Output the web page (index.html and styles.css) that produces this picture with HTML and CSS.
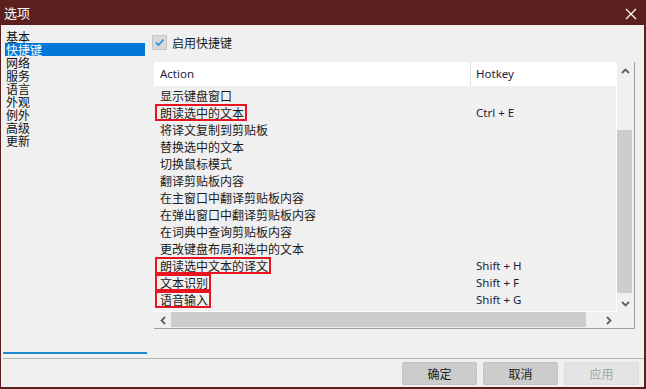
FILE: index.html
```html
<!DOCTYPE html>
<html lang="zh-CN">
<head>
    <meta charset="UTF-8">
    <title>选项</title>
    <link rel="stylesheet" href="styles.css">
</head>
<body>
    <div class="window">
        <div class="titlebar">
            <span class="title">选项</span>
            <svg class="close" width="12" height="12" viewBox="0 0 12 12">
                <path d="M1 1 L11 11 M11 1 L1 11" stroke="#fff" stroke-width="1.3" fill="none"/>
            </svg>
        </div>

        <div class="main">
            <ul class="nav">
                <li>基本</li>
                <li class="active">快捷键</li>
                <li>网络</li>
                <li>服务</li>
                <li>语言</li>
                <li>外观</li>
                <li>例外</li>
                <li>高级</li>
                <li>更新</li>
            </ul>

            <div class="content">
                <label class="check">
                    <span class="box">
                        <svg width="13" height="13" viewBox="0 0 13 13">
                            <path d="M3 6.5 L5.5 9 L10.5 3.5" stroke="#1c8fd6" stroke-width="1.6" fill="none"/>
                        </svg>
                    </span>
                    启用快捷键
                </label>

                <div class="table">
                    <div class="list">
                        <div class="head">
                            <div class="col-action">Action</div>
                            <div class="col-key">Hotkey</div>
                        </div>
                        <div class="rows">
                            <div class="row"><div class="col-action">显示键盘窗口</div><div class="col-key"></div></div>
                            <div class="row"><div class="col-action"><span class="mark">朗读选中的文本</span></div><div class="col-key">Ctrl + E</div></div>
                            <div class="row"><div class="col-action">将译文复制到剪贴板</div><div class="col-key"></div></div>
                            <div class="row"><div class="col-action">替换选中的文本</div><div class="col-key"></div></div>
                            <div class="row"><div class="col-action">切换鼠标模式</div><div class="col-key"></div></div>
                            <div class="row"><div class="col-action">翻译剪贴板内容</div><div class="col-key"></div></div>
                            <div class="row"><div class="col-action">在主窗口中翻译剪贴板内容</div><div class="col-key"></div></div>
                            <div class="row"><div class="col-action">在弹出窗口中翻译剪贴板内容</div><div class="col-key"></div></div>
                            <div class="row"><div class="col-action">在词典中查询剪贴板内容</div><div class="col-key"></div></div>
                            <div class="row"><div class="col-action">更改键盘布局和选中的文本</div><div class="col-key"></div></div>
                            <div class="row"><div class="col-action"><span class="mark">朗读选中文本的译文</span></div><div class="col-key">Shift + H</div></div>
                            <div class="row"><div class="col-action"><span class="mark">文本识别</span></div><div class="col-key">Shift + F</div></div>
                            <div class="row"><div class="col-action"><span class="mark">语音输入</span></div><div class="col-key">Shift + G</div></div>
                        </div>
                    </div>

                    <div class="vscroll">
                        <div class="arrow">
                            <svg width="9" height="6" viewBox="0 0 9 6"><path d="M1 5 L4.5 1.5 L8 5" stroke="#606060" stroke-width="1.8" fill="none"/></svg>
                        </div>
                        <div class="vtrack"><div class="vthumb"></div></div>
                        <div class="arrow">
                            <svg width="9" height="6" viewBox="0 0 9 6"><path d="M1 1 L4.5 4.5 L8 1" stroke="#606060" stroke-width="1.8" fill="none"/></svg>
                        </div>
                    </div>

                    <div class="hscroll">
                        <div class="arrow">
                            <svg width="6" height="9" viewBox="0 0 6 9"><path d="M5 1 L1.5 4.5 L5 8" stroke="#606060" stroke-width="1.8" fill="none"/></svg>
                        </div>
                        <div class="htrack"><div class="hthumb"></div></div>
                        <div class="arrow">
                            <svg width="6" height="9" viewBox="0 0 6 9"><path d="M1 1 L4.5 4.5 L1 8" stroke="#606060" stroke-width="1.8" fill="none"/></svg>
                        </div>
                    </div>

                    <div class="corner"></div>
                </div>
            </div>
        </div>

        <div class="separator"></div>

        <div class="footer">
            <button class="btn">确定</button>
            <button class="btn">取消</button>
            <button class="btn disabled">应用</button>
        </div>
    </div>
</body>
</html>
```

FILE: styles.css
```css
body {
    margin: 0;
    font-family: "Noto Sans", "Noto Sans CJK SC", sans-serif;
    font-size: 11.5px;
    color: #1a1a1a;
}

.window {
    width: 646px;
    height: 389px;
    box-sizing: border-box;
    padding: 0 2px 2px 1px;
    background-color: #5b1f1e;
    display: flex;
    flex-direction: column;
}

.titlebar {
    height: 25px;
    flex: none;
    display: flex;
    align-items: center;
    justify-content: space-between;
    padding: 0 7px 0 3px;
}

.title {
    color: #fff;
    font-family: "Noto Sans CJK SC", sans-serif;
    font-size: 13px;
    line-height: 16px;
}

.close {
    margin-top: 2px;
}

.main {
    height: 333px;
    flex: none;
    display: flex;
    background-color: #f0f0f0;
}

/* left list */
.nav {
    list-style: none;
    margin: 0 0 4px 2px;
    padding: 5px 0 0 0;
    width: 144px;
    border-bottom: 2px solid #1e8ad0;
    font-family: "Noto Sans CJK SC", sans-serif;
    font-size: 12px;
}

.nav li {
    height: 13px;
    line-height: 13px;
    margin-left: 2px;
    width: 140px;
    padding-left: 1px;
    box-sizing: border-box;
    color: #111;
}

.nav li.active {
    background-color: #0078d7;
    color: #fff;
}

.content {
    padding-left: 5px;
    display: flex;
    flex-direction: column;
}

.check {
    margin-top: 10px;
    height: 15px;
    display: flex;
    align-items: center;
    gap: 5px;
    font-family: "Noto Sans CJK SC", sans-serif;
    font-size: 12px;
    color: #1a1a1a;
}

.box {
    width: 15px;
    height: 15px;
    box-sizing: border-box;
    background-color: #d9d9d9;
    border: 1px solid #c6c6c6;
    display: flex;
    align-items: center;
    justify-content: center;
}

/* shortcut table */
.table {
    margin: 12px 0 0 2px;
    display: grid;
    grid-template-columns: 463px 16px;
    grid-template-rows: 250px 16px;
    width: 480px;
    border-right: 1px solid #a0a0a0;
    border-bottom: 1px solid #a0a0a0;
}

.list {
    display: flex;
    flex-direction: column;
    overflow: hidden;
}

.head {
    height: 24px;
    flex: none;
    background-color: #fff;
    display: flex;
    color: #1c1c3a;
}

.head .col-action,
.head .col-key {
    line-height: 24px;
}

.col-action {
    width: 317px;
    flex: none;
    padding-left: 6px;
    box-sizing: border-box;
    white-space: nowrap;
}

.head .col-action {
    border-right: 1px solid #e3e3e3;
}

.col-key {
    padding-left: 5px;
    white-space: nowrap;
}

.rows {
    flex: 1;
    padding-top: 1px;
    border-right: 1px solid #fff;
    border-bottom: 1px solid #fff;
}

.row {
    height: 17px;
    display: flex;
    line-height: 17px;
}

.row .col-action {
    font-family: "Noto Sans CJK SC", sans-serif;
    font-size: 12px;
    color: #1a1a1a;
}

.row .col-key {
    color: #1c1c3a;
}

.mark {
    display: inline-block;
    height: 17px;
    line-height: 13px;
    box-sizing: border-box;
    border: 2px solid #e8141f;
    padding: 0 1px 0 3px;
    margin-left: -5px;
}

/* scrollbars */
.vscroll {
    display: flex;
    flex-direction: column;
    background-color: #f0f0f0;
}

.vscroll .arrow {
    height: 17px;
    display: flex;
    align-items: center;
    justify-content: center;
}

.vtrack {
    flex: 1;
}

.vthumb {
    margin: 51px 1px 0 0;
    height: 163px;
    background-color: #cdcdcd;
}

.hscroll {
    display: flex;
    background-color: #f0f0f0;
}

.hscroll .arrow {
    width: 17px;
    display: flex;
    align-items: center;
    justify-content: center;
}

.htrack {
    flex: 1;
}

.hthumb {
    width: 415px;
    height: 15px;
    background-color: #cdcdcd;
}

.corner {
    background-color: #f0f0f0;
}

/* bottom bar */
.separator {
    height: 1px;
    flex: none;
    background-color: #b4b4b4;
    border-left: 2px solid #f0f0f0;
}

.footer {
    flex: 1;
    background-color: #f0f0f0;
    display: flex;
    justify-content: flex-end;
    align-items: flex-start;
    gap: 6px;
    padding: 3px 5px 0 0;
}

.btn {
    width: 75px;
    height: 23px;
    margin: 0;
    padding: 0;
    background-color: #cccccc;
    border: 1px solid #c2c2c2;
    border-radius: 2px;
    font-family: "Noto Sans CJK SC", sans-serif;
    font-size: 12px;
    color: #1a1a1a;
}

.btn.disabled {
    background-color: #e4e4e4;
    border-color: #dcdcdc;
    color: #a6a6a6;
}
```
